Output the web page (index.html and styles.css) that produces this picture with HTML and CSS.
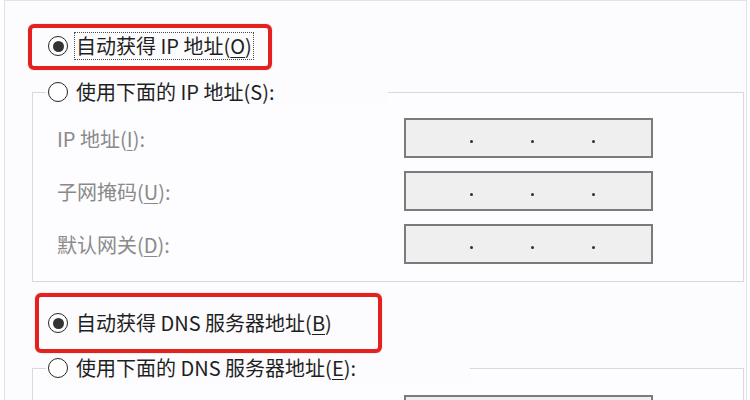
FILE: index.html
```html
<!DOCTYPE html>
<html lang="zh-CN">
<head>
<meta charset="utf-8">
<title>IP 设置</title>
<link rel="stylesheet" href="styles.css">
</head>
<body>
<div class="window">
  <div class="mark mark-ip">
    <div class="choice">
      <span class="radio on"></span>
      <span class="focus">自动获得 IP 地址(<u>O</u>)</span>
    </div>
  </div>

  <fieldset class="group group-ip">
    <legend class="legend legend-ip">
      <span class="choice">
        <span class="radio"></span>
        <span class="text">使用下面的 IP 地址(S):</span>
      </span>
    </legend>
    <div class="rows">
      <div class="row">
        <span class="label">IP 地址(<u>I</u>):</span>
        <span class="ipbox"><i></i><i></i><i></i></span>
      </div>
      <div class="row">
        <span class="label">子网掩码(<u>U</u>):</span>
        <span class="ipbox"><i></i><i></i><i></i></span>
      </div>
      <div class="row">
        <span class="label">默认网关(<u>D</u>):</span>
        <span class="ipbox"><i></i><i></i><i></i></span>
      </div>
    </div>
  </fieldset>

  <div class="mark mark-dns">
    <div class="choice">
      <span class="radio on"></span>
      <span class="text">自动获得 DNS 服务器地址(<u>B</u>)</span>
    </div>
  </div>

  <fieldset class="group group-dns">
    <legend class="legend legend-dns">
      <span class="choice">
        <span class="radio"></span>
        <span class="text">使用下面的 DNS 服务器地址(<u>E</u>):</span>
      </span>
    </legend>
    <div class="rows">
      <div class="row">
        <span class="label"></span>
        <span class="ipbox"><i></i><i></i><i></i></span>
      </div>
    </div>
  </fieldset>
</div>
</body>
</html>
```

FILE: styles.css
```css
html, body {
  margin: 0;
  padding: 0;
  background: #ffffff;
}

body {
  width: 750px;
  height: 400px;
  overflow: hidden;
  font-family: "Noto Sans CJK SC", "Noto Sans", sans-serif;
  font-size: 20px;
  color: #1f1f1f;
}

.window {
  box-sizing: border-box;
  width: 743px;
  height: 420px;
  margin-left: 4px;
  border: 1px solid #e3e3e3;
  border-bottom: none;
  background: #fcfbfd;
  padding-top: 23px;
}

u {
  text-decoration-thickness: 1px;
  text-underline-offset: 3px;
}

/* red annotation frames */
.mark {
  display: inline-flex;
  border: 4px solid #e3211f;
  border-radius: 6px;
  box-shadow: 0 0 1px rgba(160, 0, 0, 0.5);
}

.mark-ip {
  margin-left: 23px;
  padding: 4px 14px 6px 16px;
}

.mark-dns {
  margin-left: 30px;
  margin-top: 11px;
  padding: 12px 44px 12px 9px;
}

.choice {
  display: flex;
  align-items: center;
  gap: 6px;
  height: 28px;
  line-height: 26px;
  white-space: nowrap;
}

.focus {
  border: 1px dotted #4a4a4a;
  padding: 0 1px;
  height: 26px;
}

.text {
  padding: 0 2px;
}

/* radio buttons */
.radio {
  box-sizing: border-box;
  width: 20px;
  height: 20px;
  flex: none;
  border: 1.6px solid #262626;
  border-radius: 50%;
  background: #ffffff;
  display: grid;
  place-items: center;
}

.radio.on::after {
  content: "";
  width: 11px;
  height: 11px;
  border-radius: 50%;
  background: #333333;
}

/* group boxes */
.group {
  margin: 8px 2px 0 27px;
  padding: 12px 0 17px 0;
  border: 1px solid #d9d9d9;
  min-width: 0;
  background: #fdfcfe;
}

.group-dns {
  margin-top: 1px;
  padding-top: 13px;
}

.legend {
  box-sizing: border-box;
  margin-left: 13px;
  padding: 0 0 0 2px;
  background: #fcfbfd;
}

.legend-ip {
  width: 342px;
}

.legend-dns {
  width: 424px;
}

.rows {
  display: flex;
  flex-direction: column;
  gap: 13px;
  padding-left: 24px;
}

.row {
  display: flex;
  align-items: center;
  height: 40px;
}

.label {
  width: 347px;
  flex: none;
  color: #8a8a8a;
  white-space: nowrap;
}

.ipbox {
  box-sizing: border-box;
  width: 249px;
  height: 40px;
  border: 2px solid #7b7b7b;
  background: #efefef;
  display: flex;
  align-items: center;
  padding-left: 64px;
  padding-top: 7px;
  gap: 58px;
}

.ipbox i {
  width: 3px;
  height: 3px;
  border-radius: 50%;
  background: #2f2f2f;
}
```
